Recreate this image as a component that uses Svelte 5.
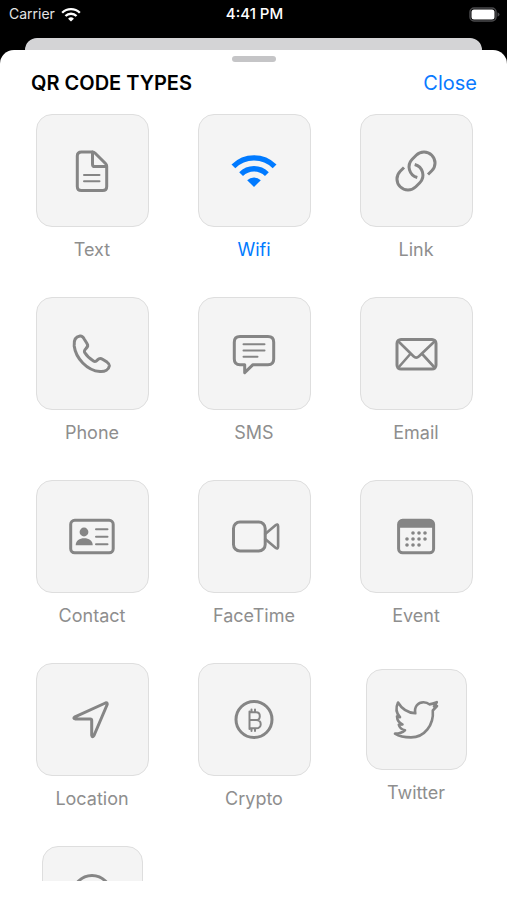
<script lang="ts">
  type QrType = {
    id: string;
    label?: string;
    compact?: boolean;
  };

  const types: QrType[] = [
    { id: 'text', label: 'Text' },
    { id: 'wifi', label: 'Wifi' },
    { id: 'link', label: 'Link' },
    { id: 'phone', label: 'Phone' },
    { id: 'sms', label: 'SMS' },
    { id: 'email', label: 'Email' },
    { id: 'contact', label: 'Contact' },
    { id: 'facetime', label: 'FaceTime' },
    { id: 'event', label: 'Event' },
    { id: 'location', label: 'Location' },
    { id: 'crypto', label: 'Crypto' },
    { id: 'twitter', label: 'Twitter', compact: true },
    { id: 'chat', compact: true }
  ];

  const eventDots = [
    [27, 26], [33, 26], [39, 26],
    [21, 32], [27, 32], [33, 32], [39, 32],
    [21, 38], [27, 38], [33, 38]
  ];

  let selected = $state('wifi');
  let open = $state(true);
</script>

<div class="screen">
  <header class="status">
    <div class="carrier">
      <span>Carrier</span>
      <svg class="signal" viewBox="8 12 44 35" aria-hidden="true">
        <path class="arc" d="M9.4 25.4A29.2 29.2 0 0 1 50.6 25.4M17.1 33.1A18.3 18.3 0 0 1 42.9 33.1" />
        <path class="solid" d="M30 46L23.2 39.2A9.8 9.8 0 0 1 36.8 39.2Z" />
      </svg>
    </div>
    <time>4:41 PM</time>
    <div class="power">
      <svg class="battery" viewBox="0 0 31 15" aria-hidden="true">
        <rect x="1" y="1" width="26" height="13" rx="4" fill="none" stroke="#4a4a4c" stroke-width="1.5" />
        <rect x="2.5" y="2.5" width="23" height="10" rx="2.5" fill="#fff" />
        <path d="M28.5 5.3Q30.5 6 30.5 7.5T28.5 9.7Z" fill="#4a4a4c" />
      </svg>
    </div>
  </header>

  {#if open}
    <div class="behind"></div>
    <section class="sheet" aria-labelledby="sheet-title">
      <div class="grabber"></div>
      <div class="heading">
        <h1 id="sheet-title">QR CODE TYPES</h1>
        <button class="close" type="button" onclick={() => (open = false)}>Close</button>
      </div>

      <div class="grid">
        {#each types as type (type.id)}
          <button
            class="item"
            class:compact={type.compact}
            class:selected={selected === type.id}
            type="button"
            onclick={() => (selected = type.id)}
          >
            <span class="tile">
              <svg class="icon" viewBox="0 0 60 60" aria-hidden="true">
                {#if type.id === 'text'}
                  <path d="M19.5 11H30.5Q32 11 33.2 12.2L43.5 22.5Q44.7 23.7 44.7 25.2V45.4Q44.7 49.4 40.7 49.4H19.3Q15.3 49.4 15.3 45.4V15Q15.3 11 19.5 11Z" />
                  <path d="M30.5 11V23.2Q30.5 25.6 33 25.6H44.5" />
                  <path class="thin" d="M22 34H37.5M22 40.3H37.5" />
                {:else if type.id === 'wifi'}
                  <path class="arc" d="M9.4 25.4A29.2 29.2 0 0 1 50.6 25.4M17.1 33.1A18.3 18.3 0 0 1 42.9 33.1" />
                  <path class="solid" d="M30 46L23.2 39.2A9.8 9.8 0 0 1 36.8 39.2Z" />
                {:else if type.id === 'link'}
                  <path class="butt" d="M42 33.5L45.8 29.8A11 11 0 0 0 30.2 14.2L26.2 18.2A11 11 0 0 0 31.3 36.5" />
                  <path class="butt" d="M18 26.5L14.2 30.2A11 11 0 0 0 29.8 45.8L33.8 41.8A11 11 0 0 0 28.7 23.5" />
                {:else if type.id === 'phone'}
                  <path d="M18 12C13.2 12.7 11.7 17 12.2 22C13.7 34 25 46.7 38 47.5C43 47.8 46.8 45.5 47.4 41.7C47.5 40 46.5 39.2 45 38.1L40.5 35.2C38.5 33.9 37 34.3 35.5 35.9C34 37.6 33 38 31.5 37C28 34.8 24.5 31.5 22.7 28.5C21.9 27 22.5 26 24 24.5C25.8 23 26.3 21.5 25 19.5L22 14.7C21 12.7 19.8 11.8 18 12Z" />
                {:else if type.id === 'sms'}
                  <path d="M16 12.5H44Q49.7 12.5 49.7 18.2V35Q49.7 40.7 44 40.7H29L20.7 48.7V40.7H16Q10.3 40.7 10.3 35V18.2Q10.3 12.5 16 12.5Z" />
                  <path class="thin" d="M19.5 20.2H40.5M19.5 26.5H40.5M19.5 32.7H33.5" />
                {:else if type.id === 'email'}
                  <rect x="11" y="15.5" width="39" height="29.5" rx="4" />
                  <path class="mid" d="M12 17L27.5 32.3Q30.2 35 33 32.3L49 17M12 44L24.3 30M49 44L36.2 30" />
                {:else if type.id === 'contact'}
                  <rect x="8.7" y="13.3" width="42.5" height="32.5" rx="4" />
                  <circle class="solid" cx="22" cy="25" r="4.4" />
                  <path class="solid" d="M13.7 38.3C13.7 33.5 17.5 31.3 22.2 31.3S30.7 33.5 30.7 38.3Z" />
                  <path class="thin" d="M34 22.2H45.5M34 29.7H45.5M34 37.2H45.5" />
                {:else if type.id === 'facetime'}
                  <rect x="9.5" y="15" width="31.7" height="29" rx="6.5" />
                  <path class="mid" d="M41.2 27L51.5 18.2Q54 16.4 54.1 19.2V39.8Q54 42.6 51.5 40.8L41.2 32" />
                {:else if type.id === 'event'}
                  <rect x="12.6" y="13.3" width="35" height="32.5" rx="4" />
                  <path class="solid" d="M12.5 20.7V16Q12.5 13 16 13H44Q47.7 13 47.7 16V20.7Z" />
                  {#each eventDots as [x, y]}
                    <circle class="solid" cx={x} cy={y} r="1.8" />
                  {/each}
                {:else if type.id === 'location'}
                  <path d="M43.4 13L13 26.8Q10.5 28.6 13.5 29H28.2Q29.7 29 29.7 30.5V45.3Q30.2 48.2 32 45.5L45.2 14.5Q45.5 12.2 43.4 13Z" />
                {:else if type.id === 'crypto'}
                  <circle cx="30" cy="29.5" r="18" />
                  <path class="thin" d="M25.5 22.3H32.2C37 22.3 37 30 32.2 30H25.5M32.2 30C38.2 30 38.2 38.3 32.2 38.3H25.5M25.5 21.5V39.1M27.5 19.5V22M31 19.5V22M27.5 38.5V41M31 38.5V41" />
                {:else if type.id === 'twitter'}
                  <path class="mid" d="M12 12.5C16 19.2 22 22.8 29.3 23.3C28 16.5 32 12.2 37.5 12.2C40 12.2 42 13 43.5 14.4C46 14 48.3 13.2 50.8 12.2L48 16.5L51 16L46.8 20.5C48 35 38.5 47.4 25 47.4C18.5 47.4 13 46.2 9 43.6C13 43.7 16.5 42.4 19 40.2C15.5 39.5 13.5 37.5 12.8 34.7L16.5 34.4C12.8 32.9 11.2 29.8 11 26.4L14 27.2C10.3 23.2 9.7 17.5 12 12.5Z" />
                {:else}
                  <circle cx="30" cy="27.5" r="19" />
                {/if}
              </svg>
            </span>
            {#if type.label}
              <span class="label">{type.label}</span>
            {/if}
          </button>
        {/each}
      </div>
    </section>
  {/if}
</div>

<style>
  :global(body) {
    background: #000;
  }

  .screen {
    display: flex;
    flex-direction: column;
    height: 100vh;
    overflow: hidden;
    background: #000;
    font-family: Inter, 'Liberation Sans', sans-serif;
  }

  .status {
    display: grid;
    grid-template-columns: 1fr auto 1fr;
    align-items: center;
    height: 28px;
    padding: 0 7px 0 9px;
    color: #fff;
    font-size: 14px;
    line-height: 28px;
  }

  .carrier {
    display: flex;
    align-items: center;
    gap: 6px;
    color: #e4e4e4;
  }

  .signal {
    width: 20px;
    height: 15px;
    color: #fff;
  }

  time {
    font-size: 15px;
    font-weight: 500;
  }

  .power {
    display: flex;
    justify-content: flex-end;
  }

  .battery {
    width: 31px;
    height: 15px;
  }

  .behind {
    flex: none;
    height: 12px;
    margin: 10px 25px 0;
    border-radius: 12px 12px 0 0;
    background: #d4d4d6;
  }

  .sheet {
    display: flex;
    flex: 1;
    flex-direction: column;
    min-height: 0;
    padding: 6px 0 19px;
    border-radius: 14px 14px 0 0;
    background: #fff;
  }

  .grabber {
    flex: none;
    width: 44px;
    height: 6px;
    margin: 0 auto;
    border-radius: 3px;
    background: #c5c5c7;
  }

  .heading {
    display: flex;
    flex: none;
    align-items: center;
    justify-content: space-between;
    height: 41px;
    padding: 0 30px 0 31px;
  }

  h1 {
    margin: 0;
    color: #000;
    font-size: 20px;
    font-weight: 600;
  }

  button {
    padding: 0;
    border: 0;
    background: none;
    font-family: inherit;
    cursor: pointer;
  }

  .close {
    color: #0a7aff;
    font-size: 20px;
  }

  .grid {
    display: grid;
    flex: 1;
    grid-template-columns: repeat(3, 1fr);
    align-content: start;
    row-gap: 35px;
    min-height: 0;
    padding: 11px 10px 0 11px;
    overflow-y: auto;
    scrollbar-width: none;
  }

  .item {
    display: flex;
    flex-direction: column;
    align-items: center;
    align-self: center;
    gap: 11px;
    color: #858585;
  }

  .tile {
    display: grid;
    box-sizing: border-box;
    width: 113px;
    height: 113px;
    place-items: center;
    border: 1px solid #dedede;
    border-radius: 16px;
    background: #f4f4f4;
  }

  .compact .tile {
    width: 101px;
    height: 101px;
  }

  .label {
    color: #8e8e8e;
    font-size: 18px;
    line-height: 24px;
  }

  .selected,
  .selected .label {
    color: #007aff;
  }

  .icon {
    width: 60px;
    height: 60px;
    fill: none;
    stroke: currentColor;
    stroke-width: 3;
    stroke-linecap: round;
    stroke-linejoin: round;
  }

  .thin {
    stroke-width: 2;
  }

  .mid {
    stroke-width: 2.6;
  }

  .butt {
    stroke-linecap: butt;
  }

  .arc {
    fill: none;
    stroke: currentColor;
    stroke-width: 5.4;
    stroke-linecap: butt;
  }

  .solid {
    fill: currentColor;
    stroke: none;
  }
</style>
